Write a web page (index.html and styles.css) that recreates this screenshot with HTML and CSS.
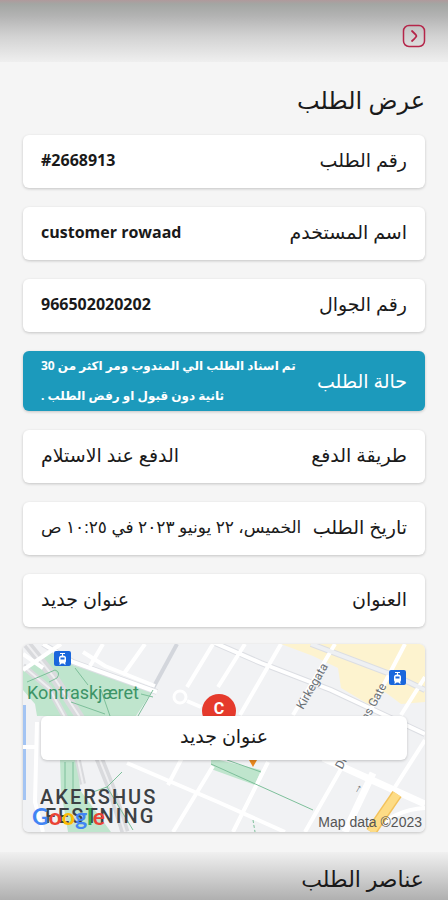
FILE: index.html
```html
<!DOCTYPE html>
<html lang="ar" dir="rtl">
<head>
  <meta charset="UTF-8">
  <meta name="viewport" content="width=device-width, initial-scale=1">
  <title>عرض الطلب</title>
  <link rel="stylesheet" href="styles.css">
</head>
<body>
  <header class="top-bar">
    <button class="back-btn" type="button" aria-label="رجوع">
      <svg viewBox="0 0 24 24" width="24" height="24" fill="none" stroke="currentColor" stroke-linecap="round" stroke-linejoin="round">
        <rect x="1.5" y="1.5" width="21" height="21" rx="5.5" stroke-width="1.5"/>
        <path d="M10 7q4.4 4 4.400 5t-4.400 5" stroke-width="1.8"/>
      </svg>
    </button>
  </header>

  <main class="order">
    <h1 class="title">عرض الطلب</h1>

    <dl class="details">
      <div class="row">
        <dt>رقم الطلب</dt>
        <dd class="latin" dir="ltr">#2668913</dd>
      </div>
      <div class="row">
        <dt>اسم المستخدم</dt>
        <dd class="latin" dir="ltr">customer rowaad</dd>
      </div>
      <div class="row">
        <dt>رقم الجوال</dt>
        <dd class="latin" dir="ltr">966502020202</dd>
      </div>
      <div class="row status">
        <dt>حالة الطلب</dt>
        <dd>تم اسناد الطلب الي المندوب ومر اكثر من 30<br>ثانية دون قبول او رفض الطلب .</dd>
      </div>
      <div class="row">
        <dt>طريقة الدفع</dt>
        <dd>الدفع عند الاستلام</dd>
      </div>
      <div class="row">
        <dt>تاريخ الطلب</dt>
        <dd class="date">الخميس، ٢٢ يونيو ٢٠٢٣ في ١٠:٢٥ ص</dd>
      </div>
      <div class="row">
        <dt>العنوان</dt>
        <dd>عنوان جديد</dd>
      </div>
    </dl>

    <section class="map">
      <svg class="map-canvas" viewBox="0 0 402 188" preserveAspectRatio="xMidYMid slice">
        <rect width="402" height="188" fill="#f1f2f4"/>

        <!-- parks -->
        <g fill="#bfe5cd">
          <path d="M0 26L32 4 50 21 130 46 113 72H14L12 60 0 46z"/>
          <path d="M37 116h18l2 30 31 42H45l-7-42z"/>
          <path d="M188 114l50 12-6 15-44-16z"/>
        </g>
        <path d="M258 0h144v58l-24 2-16-12-17 12-27-16-3-20-25-12z" fill="#fdf3cf"/>
        <path d="M0 61h3v95H0z" fill="#a3c4f3"/>

        <!-- railway -->
        <g fill="none" stroke="#d9dadd">
          <path d="M4 0l26 32 34 52 24 60 14 44" stroke-width="9"/>
          <path d="M0 22l26 22 22 40 12 56" stroke-width="6"/>
          <path d="M154 0l-25 46" stroke="#d3d6dc" stroke-width="4"/>
        </g>
        <path d="M4 0l26 32 34 52 24 60 14 44M0 22l26 22 22 40 12 56" fill="none" stroke="#efeff1" stroke-width="2"/>

        <!-- street edges and streets -->
        <g fill="none" stroke="#dcdee3" stroke-width="6">
          <path d="M20 0l30 18 84 30"/>
          <path d="M176 -8l62 27 70 27 94 44"/>
          <path d="M288 0l87 33 27 13"/>
        </g>
        <g fill="none" stroke="#fff" stroke-width="4">
          <path d="M20 0l30 18 84 30M60 8l22 14 50 20"/>
          <path d="M80 0L67 22M122 0l-22 31M190 0l-26 43"/>
          <path d="M0 26L38 0M0 10l20 14"/>
          <path d="M164 57l14 6"/>
          <circle cx="157" cy="53" r="6" stroke-width="3"/>
          <path d="M176 -8l62 27 70 27 94 44"/>
          <path d="M222 0l-27 43M258 0l-41 71M312 0l-42 71M382 0l-37 71M402 33l-24 38"/>
          <path d="M288 0l87 33 27 13" stroke="#eef0f3"/>
          <path d="M104 119l91 39 67 30M20 188l-8-30 2-80M0 103h14"/>
          <path d="M160 112l-15 29M190 122l-40 66M245 118l-35 70M322 118l-40 70"/>
          <path d="M402 96l-30 47M350 188q20-22 52-24"/>
          <path d="M350 129l-28 59M300 114l42 19 60 27" stroke-width="7"/>
        </g>
        <path d="M374 150l-26 38" fill="none" stroke="#f3c25c" stroke-width="11"/>
        <path d="M374 150l-26 38" fill="none" stroke="#fddc86" stroke-width="8"/>

        <!-- footpaths -->
        <g fill="none" stroke="#7dbf9a" stroke-width="1">
          <path d="M130 46l-15 26M4 38l28-12q6 2 2 8l-8 4M52 24l13 17M48 58l34 12M78 46l9 26M118 50l12 3"/>
          <path d="M99 128l-15 15 26 43M84 143l-14 5M42 118v30M50 118v30"/>
          <path d="M188 120l102 46M204 116l34 12"/>
          <path d="M230 176l2 12" stroke-dasharray="3 2"/>
        </g>

        <!-- tram stops -->
        <g>
          <rect x="31" y="7" width="17" height="15" rx="2" fill="#1a67dc"/>
          <path d="M37 9h5v1h-2v1.500q3 0 3 2.500v3q0 1.500-1 2l1 1.500h-1.500l-1-1h-2l-1 1H36l1-1.500q-1-.5-1-2v-3q0-2.500 3-2.500V10h-2z" fill="#fff"/>
          <path d="M37.500 13.500h4v2h-4z" fill="#1a67dc"/>
          <rect x="366" y="26" width="17" height="15" rx="2" fill="#1a67dc"/>
          <path d="M372 28h5v1h-2v1.500q3 0 3 2.500v3q0 1.500-1 2l1 1.500h-1.500l-1-1h-2l-1 1H371l1-1.500q-1-.5-1-2v-3q0-2.500 3-2.500V29h-2z" fill="#fff"/>
          <path d="M372.500 32.500h4v2h-4z" fill="#1a67dc"/>
        </g>

        <g class="map-text">
          <text class="park" x="4" y="55">Kontraskjæret</text>
          <text class="street" transform="translate(280 66) rotate(-60)">Kirkegata</text>
          <text class="street" transform="translate(319 126) rotate(-62)">Dronningens Gate</text>
          <text class="street" transform="translate(334 151) rotate(-60)">→</text>
          <text class="area" x="17" y="160">AKERSHUS</text>
          <text class="area" x="22" y="179">FESTNING</text>
          <text class="brand" x="9" y="181"><tspan fill="#4285f4">G</tspan><tspan fill="#ea4335">o</tspan><tspan fill="#fbbc05">o</tspan><tspan fill="#4285f4">g</tspan><tspan fill="#34a853">l</tspan><tspan fill="#ea4335">e</tspan></text>
          <text class="credit" x="399" y="183" text-anchor="end">Map data ©2023</text>
        </g>

        <!-- marker -->
        <path d="M226 116h8l-4 7z" fill="#e8871e"/>
        <circle cx="196" cy="67" r="17" fill="#e53a2c"/>
        <text class="marker" x="196" y="70" text-anchor="middle">C</text>
      </svg>
      <button class="map-address" type="button">عنوان جديد</button>
    </section>
  </main>

  <section class="items">
    <h2 class="title">عناصر الطلب</h2>
  </section>
</body>
</html>
```
FILE: styles.css
```css
:root {
  --bg-color: #f5f5f5;
  --text-color: #1a1a1a;
  --card-bg: #fff;
  --primary: #b5264a;
  --status: #1c9abc;
  --card-shadow: 0 1px 3px rgba(0, 0, 0, 0.2);
}

* {
  box-sizing: border-box;
}

body {
  font-family: "Open Sans", "DejaVu Sans", sans-serif;
  background: var(--bg-color);
  color: var(--text-color);
  margin: 0;
  min-height: 100vh;
  display: flex;
  flex-direction: column;
}

.top-bar {
  height: 62px;
  padding: 24px 22px 0;
  background: linear-gradient(#b09a9c, #a3a6a3 4px, #b3b3b3 16px, #d2d2d2 36px, #efefef);
}

.back-btn {
  display: block;
  padding: 0;
  border: none;
  background: none;
  color: var(--primary);
  cursor: pointer;
}

.back-btn svg {
  display: block;
}

.order {
  padding: 20px 23px;
}

.title {
  margin: 0;
  font-size: 24px;
  line-height: 36px;
  font-weight: 400;
}

.details {
  margin: 17px 0;
  display: flex;
  flex-direction: column;
  gap: 19px;
}

.row {
  display: flex;
  align-items: center;
  justify-content: space-between;
  gap: 8px;
  min-height: 53px;
  padding: 0 18px 4px;
  background: var(--card-bg);
  border-radius: 6px;
  box-shadow: var(--card-shadow);
}

.row dt {
  font-size: 19px;
  white-space: nowrap;
}

.row dd {
  margin: 0;
  font-size: 19px;
}

.row .latin {
  font-size: 16px;
  font-weight: 700;
}

.row .date {
  font-size: 17px;
  white-space: nowrap;
}

.row.status {
  padding-bottom: 0;
  background: var(--status);
  color: #fff;
}

.status dd {
  font-size: 12px;
  line-height: 30px;
  font-weight: 700;
  text-align: left;
  white-space: nowrap;
}

.map {
  position: relative;
  height: 188px;
  border-radius: 6px;
  overflow: hidden;
  box-shadow: var(--card-shadow);
}

.map-canvas {
  display: block;
  width: 100%;
  height: 100%;
  direction: ltr;
}

.map-text {
  font-family: Roboto, sans-serif;
}

.park {
  font-size: 18px;
  font-weight: 400;
  fill: #3c9467;
}

.street {
  font-size: 12px;
  fill: #6b7075;
}

.area {
  font-size: 20px;
  font-weight: 500;
  letter-spacing: 2px;
  fill: #3c4043;
}

.brand {
  font-family: Lato, sans-serif;
  font-size: 23px;
  font-weight: 700;
}

.credit {
  font-family: "Liberation Sans", sans-serif;
  font-size: 14px;
  fill: #555;
}

.marker {
  font-family: Roboto, sans-serif;
  font-size: 16px;
  font-weight: 700;
  fill: #fff;
}

.map-address {
  position: absolute;
  top: 72px;
  left: 18px;
  right: 18px;
  height: 44px;
  padding: 0 0 4px;
  border: none;
  border-radius: 6px;
  background: var(--card-bg);
  box-shadow: var(--card-shadow);
  color: var(--text-color);
  font-family: inherit;
  font-size: 19px;
}

.items {
  flex: 1;
  padding: 8px 24px 4px;
  background: linear-gradient(#f0f0f0, #b0b0b0);
}

.items .title {
  font-size: 22px;
}
```
